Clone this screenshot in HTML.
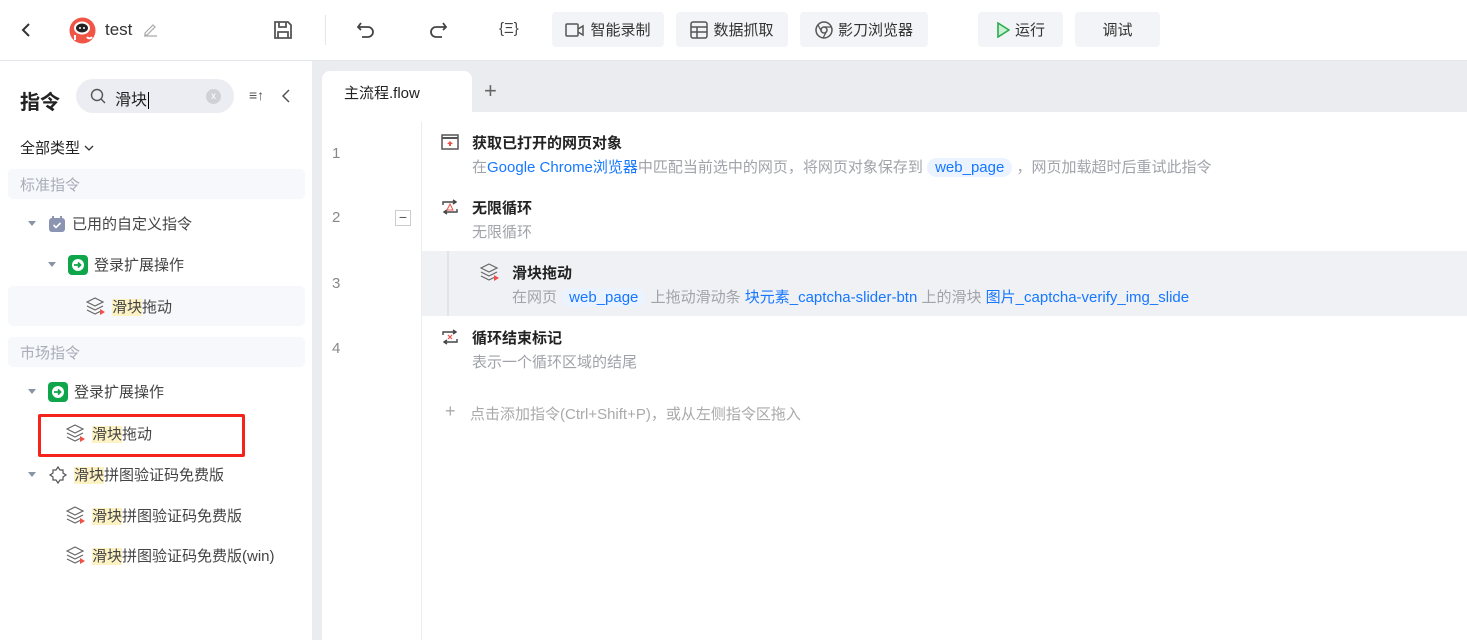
<!DOCTYPE html>
<html><head><meta charset="utf-8"><style>
*{box-sizing:border-box;margin:0;padding:0}
body{width:1467px;height:640px;overflow:hidden;background:#fff;font-family:"Liberation Sans","Noto Sans CJK SC",sans-serif;color:#333;position:relative;font-size:15px}
.a{position:absolute}
.btn{position:absolute;top:12px;height:35px;background:#f3f4f7;border-radius:4px;font-size:15px;color:#333;display:flex;align-items:center;justify-content:center;gap:5px}
.hl{background:#fdf2c4}
.tree{position:absolute;font-size:15px;color:#444;display:flex;align-items:center;gap:6px}
.tri{width:0;height:0;border-left:4px solid transparent;border-right:4px solid transparent;border-top:5px solid #8a93a6}
.t{font-size:15px;font-weight:bold;color:#222}
.d{font-size:15px;color:#a0a3aa}
.blue{color:#1677ff}
.chip{background:#eaf3ff;color:#1677ff;border-radius:10px;padding:1px 8px}
.ln{position:absolute;left:332px;font-size:15px;color:#888}
</style></head><body>
<div class="a" style="left:0;top:60px;width:1467px;height:1px;background:#e5e6eb"></div>
<svg class="a" style="left:20px;top:22px" width="12" height="16"><path d="M9 2L3 8l6 6" stroke="#333" stroke-width="2" fill="none"/></svg>
<svg class="a" style="left:69px;top:17px" width="27" height="27"><circle cx="13.5" cy="13.5" r="13" fill="#f05545"/><ellipse cx="13" cy="11" rx="8" ry="6.5" fill="#fff"/><ellipse cx="13" cy="11" rx="6" ry="4.5" fill="#222"/><circle cx="11" cy="11" r="1" fill="#fff"/><circle cx="15" cy="11" r="1" fill="#fff"/><path d="M6 23v-5M18 20a3 3 0 0 0 5 0" stroke="#fff" stroke-width="2" fill="none"/></svg>
<div class="a" style="left:105px;top:20px;font-size:17px;color:#333">test</div>
<svg class="a" style="left:142px;top:21px" width="16" height="16"><path d="M3 12l8-8 2 2-8 8H3z M2 15h13" stroke="#aaa" stroke-width="1.2" fill="none"/></svg>
<svg class="a" style="left:273px;top:20px" width="20" height="20"><path d="M2 2h13l3 3v13H2z M6 2v5h7V2 M5 18v-6h10v6" stroke="#555" stroke-width="1.8" fill="none"/></svg>
<div class="a" style="left:325px;top:15px;width:1px;height:30px;background:#e5e6eb"></div>
<svg class="a" style="left:356px;top:20px" width="20" height="20"><path d="M5 3L2 7l3 3 M2 7h10a5 5 0 0 1 0 10H6" stroke="#444" stroke-width="1.8" fill="none"/></svg>
<svg class="a" style="left:428px;top:20px" width="20" height="20"><path d="M15 3l3 4-3 3 M18 7H8a5 5 0 0 0 0 10h6" stroke="#444" stroke-width="1.8" fill="none"/></svg>
<div class="a" style="left:499px;top:20px;font-size:15px;color:#444">{Ξ}</div>
<div class="btn" style="left:552px;width:112px"><svg width="20" height="16"><rect x="1" y="2" width="12" height="12" rx="1" stroke="#555" stroke-width="1.5" fill="none"/><path d="M13 7l5-3v9l-5-3" stroke="#555" stroke-width="1.5" fill="none"/></svg>智能录制</div>
<div class="btn" style="left:676px;width:112px"><svg width="18" height="18"><rect x="1" y="1" width="16" height="16" rx="2" stroke="#555" stroke-width="1.5" fill="none"/><path d="M1 6h16M1 11h16M7 6v11" stroke="#555" stroke-width="1.5"/></svg>数据抓取</div>
<div class="btn" style="left:800px;width:128px"><svg width="18" height="18"><circle cx="9" cy="9" r="8" stroke="#555" stroke-width="1.5" fill="none"/><circle cx="9" cy="9" r="3" stroke="#555" stroke-width="1.5" fill="none"/><path d="M9 6h7M6.5 10.5L3 4M11.5 10.5L8 17" stroke="#555" stroke-width="1.3"/></svg>影刀浏览器</div>
<div class="btn" style="left:978px;width:85px"><svg width="14" height="16"><path d="M2 1l11 7-11 7z" stroke="#2bab4d" stroke-width="1.6" fill="#c6f0cf"/></svg>运行</div>
<div class="btn" style="left:1075px;width:85px">调试</div>

<div class="a" style="left:312px;top:61px;width:10px;height:579px;background:#ebecf0"></div>
<div class="a" style="left:20px;top:86px;font-size:20px;font-weight:bold;color:#222">指令</div>
<div class="a" style="left:76px;top:79px;width:158px;height:34px;border-radius:17px;background:#ebedf2"></div>
<svg class="a" style="left:90px;top:88px" width="16" height="16"><circle cx="7" cy="7" r="5.5" stroke="#555" stroke-width="1.4" fill="none"/><path d="M11 11l4 4" stroke="#555" stroke-width="1.4"/></svg>
<div class="a" style="left:115px;top:86px;font-size:16px;color:#222">滑块<span style="border-left:1px solid #000;margin-left:1px"></span></div>
<div class="a" style="left:206px;top:89px;width:15px;height:15px;border-radius:50%;background:#cfd1d6;color:#fff;font-size:10px;text-align:center;line-height:15px">x</div>
<div class="a" style="left:249px;top:87px;font-size:14px;color:#555">≡↑</div>
<svg class="a" style="left:281px;top:88px" width="10" height="16"><path d="M8 2L2 8l6 6" stroke="#555" stroke-width="1.5" fill="none"/></svg>
<div class="a" style="left:20px;top:137px;font-size:15px;color:#222">全部类型 <svg width="10" height="8"><path d="M1 1l4 4 4-4" stroke="#333" stroke-width="1.3" fill="none"/></svg></div>
<div class="a" style="left:8px;top:169px;width:297px;height:30px;background:#f7f8fb;border-radius:5px;color:#a8adb8;font-size:15px;padding:5px 12px">标准指令</div>
<div class="tree" style="left:28px;top:213px"><span class="tri"></span><svg width="18" height="18" style="margin-left:6px"><rect x="1" y="3" width="16" height="14" rx="3" fill="#8b94b0"/><path d="M5 3V1M13 3V1" stroke="#8b94b0" stroke-width="2"/><path d="M5.5 10l2.5 2.5 4.5-4.5" stroke="#fff" stroke-width="1.6" fill="none"/></svg><span>已用的自定义指令</span></div>
<div class="tree" style="left:48px;top:254px"><span class="tri"></span><svg width="20" height="20" style="margin-left:6px"><rect width="20" height="20" rx="4" fill="#0fa54a"/><circle cx="10" cy="10" r="6" fill="#fff"/><path d="M6 10h6M10 7.5l2.5 2.5-2.5 2.5" stroke="#0fa54a" stroke-width="1.8" fill="none"/></svg><span>登录扩展操作</span></div>
<div class="a" style="left:8px;top:286px;width:297px;height:40px;background:#f7f8fb;border-radius:5px"></div>
<svg width="0" height="0" style="position:absolute"><defs><g id="lay"><path d="M9 1L1 5l8 4 8-4z M1 9l8 4 8-4 M1 13l8 4 5-2.5" stroke="#666" stroke-width="1.2" fill="none"/><path d="M14 12l5 3-5 3z" fill="#f0504a"/></g></defs></svg>
<div class="tree" style="left:86px;top:296px"><svg width="20" height="19"><use href="#lay"/></svg><span><span class="hl">滑块</span>拖动</span></div>
<div class="a" style="left:8px;top:337px;width:297px;height:30px;background:#f7f8fb;border-radius:5px;color:#a8adb8;font-size:15px;padding:5px 12px">市场指令</div>
<div class="tree" style="left:28px;top:381px"><span class="tri"></span><svg width="20" height="20" style="margin-left:6px"><rect width="20" height="20" rx="4" fill="#0fa54a"/><circle cx="10" cy="10" r="6" fill="#fff"/><path d="M6 10h6M10 7.5l2.5 2.5-2.5 2.5" stroke="#0fa54a" stroke-width="1.8" fill="none"/></svg><span>登录扩展操作</span></div>
<div class="a" style="left:38px;top:414px;width:207px;height:43px;border:3px solid #f5231c;border-radius:2px"></div>
<div class="tree" style="left:66px;top:423px"><svg width="20" height="19"><use href="#lay"/></svg><span><span class="hl">滑块</span>拖动</span></div>
<div class="tree" style="left:28px;top:464px"><span class="tri"></span><svg width="20" height="20" style="margin-left:6px"><path d="M10 2l2 3h3v3l3 2-3 2v3h-3l-2 3-2-3H5v-3l-3-2 3-2V5h3z" stroke="#555" stroke-width="1.2" fill="none"/></svg><span><span class="hl">滑块</span>拼图验证码免费版</span></div>
<div class="tree" style="left:66px;top:505px"><svg width="20" height="19"><use href="#lay"/></svg><span><span class="hl">滑块</span>拼图验证码免费版</span></div>
<div class="tree" style="left:66px;top:545px"><svg width="20" height="19"><use href="#lay"/></svg><span><span class="hl">滑块</span>拼图验证码免费版(win)</span></div>

<div class="a" style="left:322px;top:61px;width:1145px;height:51px;background:#ebecf0"></div>
<div class="a" style="left:322px;top:71px;width:150px;height:41px;background:#fff;border-radius:8px 8px 0 0;font-size:15px;color:#222;padding:11px 22px">主流程.flow</div>
<div class="a" style="left:484px;top:78px;font-size:22px;color:#666;font-weight:300">+</div>
<div class="a" style="left:421px;top:122px;width:1px;height:518px;background:#ececf0"></div>
<div class="a" style="left:422px;top:251px;width:1045px;height:65px;background:#f0f1f5"></div>
<div class="a" style="left:447px;top:251px;width:2px;height:65px;background:#e3e4e8"></div>
<div class="ln" style="top:145px">1</div><div class="ln" style="top:209px">2</div><div class="ln" style="top:275px">3</div><div class="ln" style="top:340px">4</div>
<div class="a" style="left:395px;top:210px;width:16px;height:16px;border:1px solid #ccc;text-align:center;line-height:12px;color:#555;font-size:14px">−</div>

<svg class="a" style="left:441px;top:134px" width="18" height="16"><rect x="1" y="1" width="16" height="14" stroke="#555" stroke-width="1.5" fill="none"/><path d="M1 4h16" stroke="#555" stroke-width="2"/><path d="M9 7l3 3h-2v2H8v-2H6z" fill="#f0504a"/></svg>
<div class="a t" style="left:472px;top:132px">获取已打开的网页对象</div>
<div class="a d" style="left:472px;top:156px">在<span class="blue">Google Chrome浏览器</span>中匹配当前选中的网页，将网页对象保存到 <span class="chip">web_page</span> ，网页加载超时后重试此指令</div>

<svg class="a" style="left:441px;top:199px" width="18" height="16"><path d="M2 6V3h13M12 1l3 2-3 2 M16 10v3H3M6 11l-3 2 3 2" stroke="#444" stroke-width="1.4" fill="none"/><path d="M9 5l3 6H6z" stroke="#f0504a" fill="none"/></svg>
<div class="a t" style="left:472px;top:197px">无限循环</div>
<div class="a d" style="left:472px;top:221px">无限循环</div>

<svg class="a" style="left:480px;top:263px" width="20" height="19"><use href="#lay"/></svg>
<div class="a t" style="left:512px;top:262px">滑块拖动</div>
<div class="a d" style="left:512px;top:286px">在网页 <span class="chip">web_page</span> 上拖动滑动条 <span class="blue">块元素_captcha-slider-btn</span> 上的滑块 <span class="blue">图片_captcha-verify_img_slide</span></div>

<svg class="a" style="left:441px;top:329px" width="18" height="16"><path d="M2 6V3h13M12 1l3 2-3 2 M16 10v3H3M6 11l-3 2 3 2" stroke="#444" stroke-width="1.4" fill="none"/><path d="M7 6l4 4M11 6l-4 4" stroke="#f0504a" stroke-width="1.2"/></svg>
<div class="a t" style="left:472px;top:327px">循环结束标记</div>
<div class="a d" style="left:472px;top:351px">表示一个循环区域的结尾</div>

<div class="a" style="left:445px;top:401px;font-size:18px;color:#aaa;font-weight:300">+</div>
<div class="a d" style="left:470px;top:403px;color:#aaa">点击添加指令(Ctrl+Shift+P)，或从左侧指令区拖入</div>
</body></html>
